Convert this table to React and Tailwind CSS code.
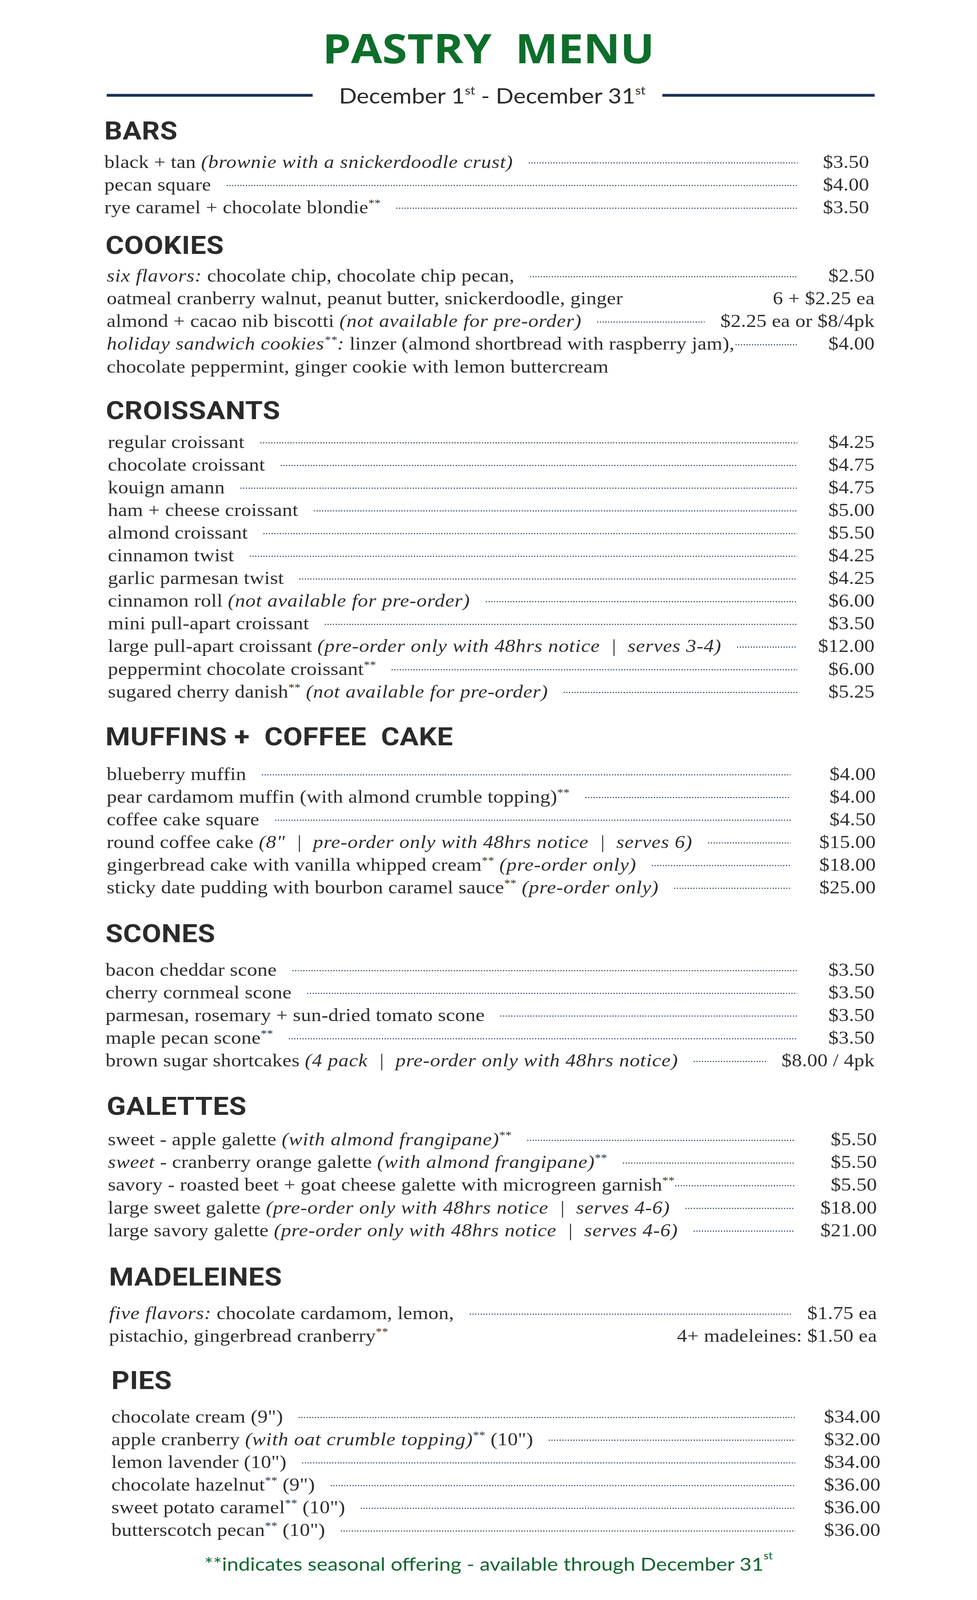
import React from "react";

const serif = { fontFamily: '"Liberation Serif", "Times New Roman", serif' };

function I({ children }) {
  return <span className="italic tracking-[0.018em]">{children}</span>;
}
function S() {
  return <sup className="text-[0.6em] relative top-[-0.6em] align-baseline">**</sup>;
}

const DOTS =
  "flex-1 h-[3px] translate-y-[3px] bg-[linear-gradient(to_right,#2c4670_50%,transparent_50%)] bg-[length:7px_3px] bg-repeat-x";

function Row({ children, price, dots = true, tight = false, pw }) {
  return (
    <div className="flex items-center h-[65px]">
      <span className="whitespace-nowrap">{children}</span>
      {dots ? (
        <span className={tight ? `${DOTS} ml-[2px]` : `${DOTS} ml-[40px]`} />
      ) : (
        <span className="flex-1" />
      )}
      {price ? (
        <span className={`flex-none whitespace-nowrap text-right box-border pl-[40px] ${pw}`}>{price}</span>
      ) : null}
    </div>
  );
}

function Heading({ children, gap }) {
  return (
    <div
      className={`h-[80px] flex items-center text-[72px] font-bold leading-none text-[#2b2b2b] tracking-[0.01em] ${gap}`}
      style={{ fontFamily: "Roboto, 'Liberation Sans', sans-serif" }}
    >
      {children}
    </div>
  );
}

export default function App() {
  return (
    <div className="w-[2500px] h-[4096px] overflow-hidden bg-white">
      <div className="w-[2500px] h-[4583px] origin-top scale-y-[0.8937] bg-white pt-[76px] text-[#2e2e2e]">
        {/* Title */}
        <div
          className="h-[120px] flex items-center justify-center text-[116px] font-bold leading-none text-[#0e6e2b]"
          style={{ fontFamily: '"Open Sans", "Noto Sans", sans-serif' }}
        >
          PASTRY&nbsp;&nbsp;MENU
        </div>

        {/* Date line */}
        <div className="mt-[37px] h-[80px] flex items-center ml-[273px] w-[1965px]">
          <div className="w-[527px] h-[8px] bg-[#1b2d50]" />
          <div
            className="flex-1 pl-[24px] text-center text-[60px] leading-none text-[#2b2b2b] whitespace-nowrap"
            style={{ fontFamily: 'Lato, "Open Sans", sans-serif' }}
          >
            December 1<sup className="text-[0.55em] relative top-[-0.75em] align-baseline">st</sup> - December 31
            <sup className="text-[0.55em] relative top-[-0.75em] align-baseline">st</sup>
          </div>
          <div className="w-[543px] h-[8px] bg-[#1b2d50]" />
        </div>

        <div className="text-[52px] tracking-[0.005em]" style={serif}>
          {/* BARS */}
          <section className="mt-[22px] ml-[267px] w-[1957px]">
            <Heading gap="mb-[16px]">BARS</Heading>
            <Row pw="min-w-[183px]" price="$3.50">
              black + tan <I>(brownie with a snickerdoodle crust)</I>
            </Row>
            <Row pw="min-w-[183px]" price="$4.00">
              pecan square
            </Row>
            <Row pw="min-w-[183px]" price="$3.50">
              rye caramel + chocolate blondie<S />
            </Row>
          </section>

          {/* COOKIES */}
          <section className="mt-[37px] ml-[273px] w-[1965px]">
            <Heading gap="mb-[14px] -ml-[3px]">COOKIES</Heading>
            <Row pw="min-w-[198px]" price="$2.50">
              <I>six flavors:</I> chocolate chip, chocolate chip pecan,
            </Row>
            <Row pw="min-w-[198px]" price="6 + $2.25 ea" dots={false}>
              oatmeal cranberry walnut, peanut butter, snickerdoodle, ginger
            </Row>
            <Row pw="min-w-[198px]" price="$2.25 ea or $8/4pk">
              almond + cacao nib biscotti <I>(not available for pre-order)</I>
            </Row>
            <Row pw="min-w-[198px]" price="$4.00" tight>
              <I>
                holiday sandwich cookies<S />:
              </I>{" "}
              linzer (almond shortbread with raspberry jam),
            </Row>
            <Row dots={false}>chocolate peppermint, ginger cookie with lemon buttercream</Row>
          </section>

          {/* CROISSANTS */}
          <section className="mt-[55px] ml-[276px] w-[1962px]">
            <Heading gap="mb-[16px] -ml-[5px]">CROISSANTS</Heading>
            <Row pw="min-w-[198px]" price="$4.25">regular croissant</Row>
            <Row pw="min-w-[198px]" price="$4.75">chocolate croissant</Row>
            <Row pw="min-w-[198px]" price="$4.75">kouign amann</Row>
            <Row pw="min-w-[198px]" price="$5.00">ham + cheese croissant</Row>
            <Row pw="min-w-[198px]" price="$5.50">almond croissant</Row>
            <Row pw="min-w-[198px]" price="$4.25">cinnamon twist</Row>
            <Row pw="min-w-[198px]" price="$4.25">garlic parmesan twist</Row>
            <Row pw="min-w-[198px]" price="$6.00">
              cinnamon roll <I>(not available for pre-order)</I>
            </Row>
            <Row pw="min-w-[198px]" price="$3.50">mini pull-apart croissant</Row>
            <Row pw="min-w-[198px]" price="$12.00">
              large pull-apart croissant <I>(pre-order only with 48hrs notice&nbsp;&nbsp;|&nbsp;&nbsp;serves 3-4)</I>
            </Row>
            <Row pw="min-w-[198px]" price="$6.00">
              peppermint chocolate croissant<S />
            </Row>
            <Row pw="min-w-[198px]" price="$5.25">
              sugared cherry danish<S /> <I>(not available for pre-order)</I>
            </Row>
          </section>

          {/* MUFFINS */}
          <section className="mt-[58px] ml-[273px] w-[1968px]">
            <Heading gap="mb-[33px] -ml-[3px]">MUFFINS&nbsp;+&nbsp;&nbsp;COFFEE&nbsp;&nbsp;CAKE</Heading>
            <Row pw="min-w-[218px]" price="$4.00">blueberry muffin</Row>
            <Row pw="min-w-[218px]" price="$4.00">
              pear cardamom muffin (with almond crumble topping)<S />
            </Row>
            <Row pw="min-w-[218px]" price="$4.50">coffee cake square</Row>
            <Row pw="min-w-[218px]" price="$15.00">
              round coffee cake <I>(8&quot;&nbsp;&nbsp;|&nbsp;&nbsp;pre-order only with 48hrs notice&nbsp;&nbsp;|&nbsp;&nbsp;serves 6)</I>
            </Row>
            <Row pw="min-w-[218px]" price="$18.00">
              gingerbread cake with vanilla whipped cream<S /> <I>(pre-order only)</I>
            </Row>
            <Row pw="min-w-[218px]" price="$25.00">
              sticky date pudding with bourbon caramel sauce<S /> <I>(pre-order only)</I>
            </Row>
          </section>

          {/* SCONES */}
          <section className="mt-[61px] ml-[270px] w-[1968px]">
            <Heading gap="mb-[30px]">SCONES</Heading>
            <Row pw="min-w-[198px]" price="$3.50">bacon cheddar scone</Row>
            <Row pw="min-w-[198px]" price="$3.50">cherry cornmeal scone</Row>
            <Row pw="min-w-[198px]" price="$3.50">parmesan, rosemary + sun-dried tomato scone</Row>
            <Row pw="min-w-[198px]" price="$3.50">
              maple pecan scone<S />
            </Row>
            <Row pw="min-w-[198px]" price="$8.00 / 4pk">
              brown sugar shortcakes <I>(4 pack&nbsp;&nbsp;|&nbsp;&nbsp;pre-order only with 48hrs notice)</I>
            </Row>
          </section>

          {/* GALETTES */}
          <section className="mt-[59px] ml-[276px] w-[1968px]">
            <Heading gap="mb-[22px] -ml-[3px]">GALETTES</Heading>
            <Row pw="min-w-[210px]" price="$5.50">
              sweet - apple galette <I>(with almond frangipane)</I>
              <S />
            </Row>
            <Row pw="min-w-[210px]" price="$5.50">
              <I>sweet</I> - cranberry orange galette <I>(with almond frangipane)</I>
              <S />
            </Row>
            <Row pw="min-w-[210px]" price="$5.50" tight>
              savory - roasted beet + goat cheese galette with microgreen garnish<S />
            </Row>
            <Row pw="min-w-[210px]" price="$18.00">
              large sweet galette <I>(pre-order only with 48hrs notice&nbsp;&nbsp;|&nbsp;&nbsp;serves 4-6)</I>
            </Row>
            <Row pw="min-w-[210px]" price="$21.00">
              large savory galette <I>(pre-order only with 48hrs notice&nbsp;&nbsp;|&nbsp;&nbsp;serves 4-6)</I>
            </Row>
          </section>

          {/* MADELEINES */}
          <section className="mt-[62px] ml-[279px] w-[1965px]">
            <Heading gap="mb-[31px]">MADELEINES</Heading>
            <Row pw="min-w-[210px]" price="$1.75 ea">
              <I>five flavors:</I> chocolate cardamom, lemon,
            </Row>
            <Row pw="min-w-[210px]" price="4+ madeleines: $1.50 ea" dots={false}>
              pistachio, gingerbread cranberry<S />
            </Row>
          </section>

          {/* PIES */}
          <section className="mt-[56px] ml-[285px] w-[1968px]">
            <Heading gap="mb-[30px]">PIES</Heading>
            <Row pw="min-w-[218px]" price="$34.00">chocolate cream (9&quot;)</Row>
            <Row pw="min-w-[218px]" price="$32.00">
              apple cranberry <I>(with oat crumble topping)</I>
              <S /> (10&quot;)
            </Row>
            <Row pw="min-w-[218px]" price="$34.00">lemon lavender (10&quot;)</Row>
            <Row pw="min-w-[218px]" price="$36.00">
              chocolate hazelnut<S /> (9&quot;)
            </Row>
            <Row pw="min-w-[218px]" price="$36.00">
              sweet potato caramel<S /> (10&quot;)
            </Row>
            <Row pw="min-w-[218px]" price="$36.00">
              butterscotch pecan<S /> (10&quot;)
            </Row>
          </section>
        </div>

        {/* Footer */}
        <div
          className="mt-[28px] h-[70px] flex items-center justify-center text-[53px] leading-none text-[#0f6630]"
          style={{ fontFamily: 'Lato, "Open Sans", sans-serif' }}
        >
          **indicates seasonal offering - available through December 31
          <sup className="text-[0.55em] relative top-[-0.75em] align-baseline">st</sup>
        </div>
      </div>
    </div>
  );
}
